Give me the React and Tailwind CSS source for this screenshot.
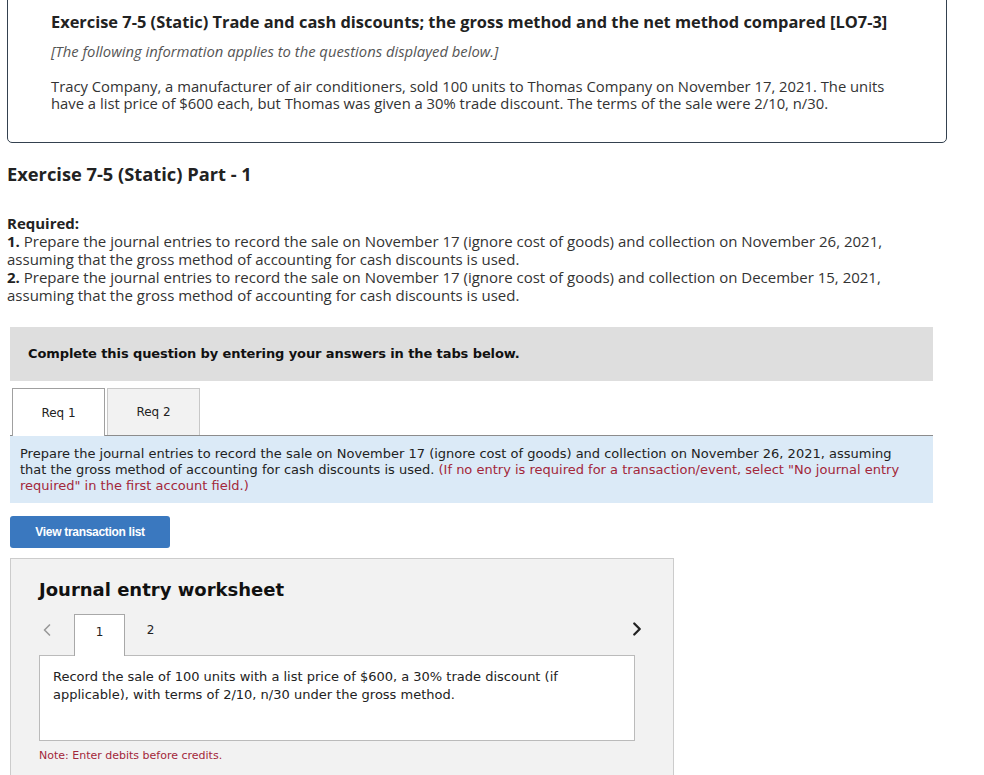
import { ChevronLeft, ChevronRight } from "lucide-react";

const sans = { fontFamily: '"Liberation Sans", Arial, sans-serif' };

export default function App() {
  return (
    <div className="bg-white w-[984px] min-h-[775px] text-[#1f1f1f] font-['Open_Sans',Arial,sans-serif]">
      {/* intro card, top edge scrolled off */}
      <div className="ml-[7px] w-[940px] h-[147px] -mt-[4px] border border-[#34414f] rounded-b-[5px] pl-[43px] pt-[15px]">
        <h1 className="text-[16.4px] font-bold leading-[20px] text-[#222] whitespace-nowrap">
          Exercise 7-5 (Static) Trade and cash discounts; the gross method and the net method compared [LO7-3]
        </h1>
        <p className="mt-[10px] text-[14.8px] italic text-[#555] leading-[18px] whitespace-nowrap">
          [The following information applies to the questions displayed below.]
        </p>
        <p className="mt-[18px] text-[14.8px] leading-[17px] text-[#333] whitespace-nowrap">
          Tracy Company, a manufacturer of air conditioners, sold 100 units to Thomas Company on November 17, 2021. The units
          <br />
          have a list price of $600 each, but Thomas was given a 30% trade discount. The terms of the sale were 2/10, n/30.
        </p>
      </div>

      <h2 className="ml-[7px] mt-[20px] text-[18.3px] font-bold leading-[22px] text-[#222]">
        Exercise 7-5 (Static) Part - 1
      </h2>

      <div className="ml-[7px] mt-[29px] text-[15px] leading-[18px] text-[#333] whitespace-nowrap">
        <p className="font-bold text-[#222]">Required:</p>
        <p>
          <span className="font-bold text-[#222]">1.</span> Prepare the journal entries to record the sale on November 17 (ignore cost of goods) and collection on November 26, 2021,
          <br />
          assuming that the gross method of accounting for cash discounts is used.
        </p>
        <p>
          <span className="font-bold text-[#222]">2.</span> Prepare the journal entries to record the sale on November 17 (ignore cost of goods) and collection on December 15, 2021,
          <br />
          assuming that the gross method of accounting for cash discounts is used.
        </p>
      </div>

      <div className="font-['DejaVu_Sans',Verdana,sans-serif]">
        <div className="ml-[10px] mt-[23px] w-[923px] h-[54px] bg-[#dedede] flex items-center pl-[18px]">
          <p className="text-[13px] font-bold text-[#111] tracking-[-0.1px]">Complete this question by entering your answers in the tabs below.</p>
        </div>

        <div className="ml-[10px] mt-[7px] w-[923px] flex items-end border-b border-[#8c8c8c] pl-[2px]">
          <div className="w-[93px] h-[48px] bg-white border border-b-0 border-[#a0a0a0] flex items-center justify-center text-[12px] text-[#222] -mb-px">
            Req 1
          </div>
          <div className="ml-[2px] w-[93px] h-[47px] bg-[#f2f2f2] border border-b-0 border-[#c8c8c8] flex items-center justify-center text-[12px] text-[#222]">
            Req 2
          </div>
        </div>

        <div className="ml-[10px] w-[923px] h-[67px] bg-[#dbeaf7] px-[10px] pt-[10px] text-[13px] leading-[16px] text-[#222] whitespace-nowrap">
          Prepare the journal entries to record the sale on November 17 (ignore cost of goods) and collection on November 26, 2021, assuming
          <br />
          that the gross method of accounting for cash discounts is used.{" "}
          <span className="text-[#a3273a]">
            (If no entry is required for a transaction/event, select "No journal entry
            <br />
            required" in the first account field.)
          </span>
        </div>

        <button
          style={sans}
          className="ml-[10px] mt-[13px] w-[160px] h-[32px] bg-[#3a78bf] rounded-[3px] text-white text-[12px] font-bold tracking-[-0.3px]"
        >
          View transaction list
        </button>

        <div className="ml-[10px] mt-[10px] w-[664px] h-[230px] bg-[#f2f2f2] border border-[#cccccc] border-b-0 pl-[28px] pr-[39px] pt-[20px]">
          <h3 className="text-[18px] font-bold text-[#111] leading-[22px]">Journal entry worksheet</h3>

          <div className="mt-[12px] flex items-end h-[42px] relative">
            <ChevronLeft className="absolute left-[-2px] top-[7px] w-[20px] h-[20px] text-[#9a9a9a]" strokeWidth={2} />
            <div className="ml-[35px] w-[51px] h-[42px] bg-white border border-b-0 border-[#a8a8a8] flex justify-center pt-[8px] text-[12px] text-[#222] -mb-px relative z-10">
              1
            </div>
            <div className="w-[51px] h-[42px] flex justify-center pt-[8px] text-[12px] text-[#222]">2</div>
            <ChevronRight className="absolute right-[-14px] top-[5px] w-[22px] h-[22px] text-[#222]" strokeWidth={2.5} />
          </div>

          <div className="w-[596px] h-[86px] bg-white border border-[#bbbbbb] px-[13px] pt-[12px] text-[13px] leading-[18px] text-[#222]">
            Record the sale of 100 units with a list price of $600, a 30% trade discount (if
            <br />
            applicable), with terms of 2/10, n/30 under the gross method.
          </div>

          <p className="mt-[7px] text-[11px] text-[#a3273a]">Note: Enter debits before credits.</p>
        </div>
      </div>
    </div>
  );
}
